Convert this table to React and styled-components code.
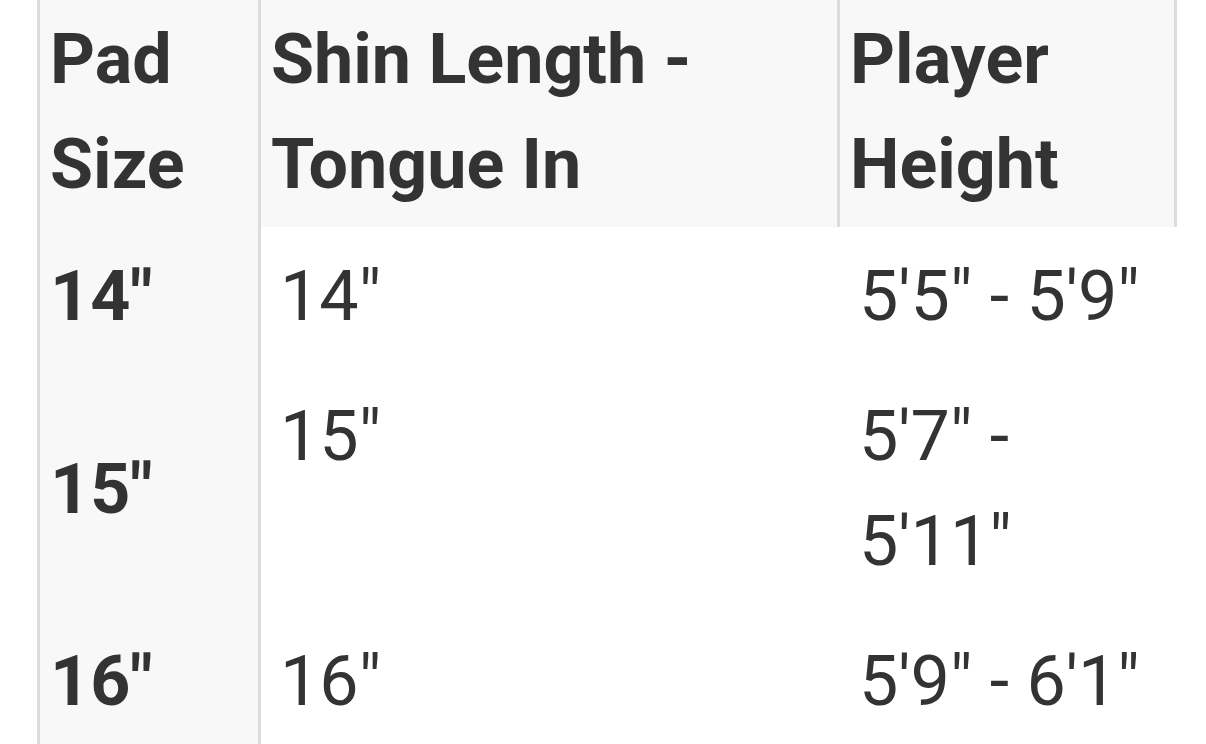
import React from 'react';
import styled, { createGlobalStyle } from 'styled-components';

const rows = [
  { size: '14"', shin: '14"', height: '5\'5" - 5\'9"' },
  { size: '15"', shin: '15"', height: '5\'7" - 5\'11"' },
  { size: '16"', shin: '16"', height: '5\'9" - 6\'1"' }
];

const App = () => {
  return (
    <>
      <GlobalStyle />
      <Page>
        <Table>
          <colgroup>
            <col style={{ width: 224 }} />
            <col style={{ width: 579 }} />
            <col style={{ width: 337 }} />
          </colgroup>
          <thead>
            <tr>
              <HeadCell $first>Pad Size</HeadCell>
              <HeadCell>Shin Length - Tongue In</HeadCell>
              <HeadCell>Player Height</HeadCell>
            </tr>
          </thead>
          <tbody>
            {rows.map((row) => (
              <tr key={row.size}>
                <RowHead scope='row'>{row.size}</RowHead>
                <Cell>{row.shin}</Cell>
                <Cell>{row.height}</Cell>
              </tr>
            ))}
          </tbody>
        </Table>
      </Page>
    </>
  );
};

const GlobalStyle = createGlobalStyle`
  html, body {
    margin: 0;
    padding: 0;
    background: #ffffff;
  }

  body {
    font-family: Roboto, 'Liberation Sans', sans-serif;
    color: #333333;
  }
`;

const Page = styled.div`
  width: 1206px;
  height: 744px;
  overflow: hidden;
  padding-left: 37px;
  box-sizing: border-box;
`;

const Table = styled.table`
  table-layout: fixed;
  width: 1140px;
  border-collapse: separate;
  border-spacing: 0;
  font-size: 70px;
  line-height: 105px;
`;

const HeadCell = styled.th`
  box-sizing: border-box;
  background: #f8f8f8;
  font-weight: 700;
  text-align: left;
  vertical-align: top;
  padding: 7px 8px 10px ${(p) => (p.$first ? '10px' : '10px')};
  border-right: 3px solid #dcdcdc;
  border-left: ${(p) => (p.$first ? '3px solid #dcdcdc' : 'none')};
  color: #333333;
`;

const RowHead = styled.th`
  box-sizing: border-box;
  background: #f8f8f8;
  font-weight: 700;
  text-align: left;
  vertical-align: middle;
  padding: 17px 6px 18px 10px;
  border-left: 3px solid #dcdcdc;
  border-right: 3px solid #dcdcdc;
  color: #333333;
`;

const Cell = styled.td`
  box-sizing: border-box;
  font-weight: 400;
  vertical-align: top;
  padding: 17px 14px 18px 19px;
  color: #333333;
`;

export default App;
